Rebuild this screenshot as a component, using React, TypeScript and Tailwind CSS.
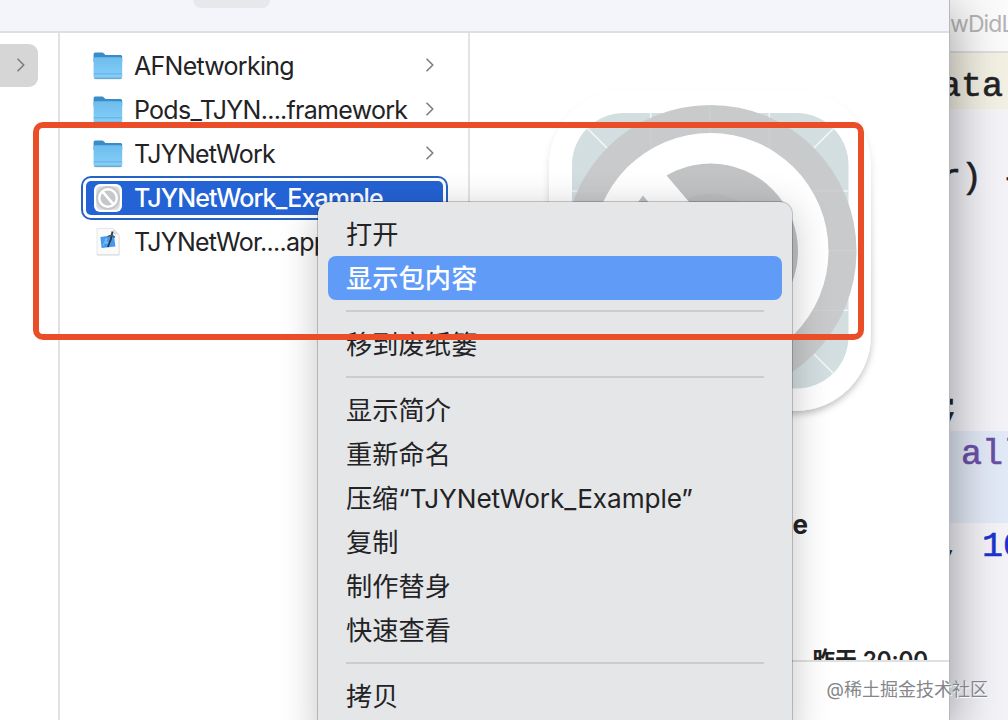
import React from 'react';

type FileItem = {
    name: string;
    kind: 'folder' | 'app' | 'project';
    selected?: boolean;
}

type MenuEntry = {
    label?: string;
    active?: boolean;
    separator?: boolean;
    className?: string;
}

type CodeLine = {
    text: string;
    className?: string;
    tail?: string;
}

const files: FileItem[] = [
    { name: 'AFNetworking', kind: 'folder' },
    { name: 'Pods_TJYN....framework', kind: 'folder' },
    { name: 'TJYNetWork', kind: 'folder' },
    { name: 'TJYNetWork_Example', kind: 'app', selected: true },
    { name: 'TJYNetWor....app', kind: 'project' },
];

const menu: MenuEntry[] = [
    { label: '打开' },
    { label: '显示包内容', active: true },
    { separator: true },
    { label: '移到废纸篓' },
    { separator: true },
    { label: '显示简介' },
    { label: '重新命名' },
    { label: '压缩“TJYNetWork_Example”', className: 'tracking-[-0.07px]' },
    { label: '复制' },
    { label: '制作替身' },
    { label: '快速查看' },
    { separator: true },
    { label: '拷贝' },
];

const code: CodeLine[] = [
    { text: 'ata', className: 'bg-[#f3f0e4]' },
    { text: '' },
    { text: 'r) {' },
    { text: '' },
    { text: '' },
    { text: '' },
    { text: '' },
    { text: ';' },
    { text: ' all', className: 'bg-[#e3eaf7] text-[#6b4fa8]' },
    { text: '', className: 'bg-[#e3eaf7]' },
    { text: ', ', tail: '10' },
];

const Chevron = () => (
    <svg className="-mt-0.5" width="8" height="14" viewBox="0 0 8 14" fill="none" stroke="#7c7c7c" strokeWidth="1.6" strokeLinecap="round" strokeLinejoin="round">
        <path d="M1 1.2 6.8 7 1 12.8" />
    </svg>
);

const FolderIcon = () => (
    <svg width="30" height="28" viewBox="0 0 30 28">
        <defs>
            <linearGradient id="folder" x1="0" y1="0" x2="0" y2="1">
                <stop offset="0" stopColor="#6dbdec" />
                <stop offset="1" stopColor="#86cffa" />
            </linearGradient>
        </defs>
        <rect x="0.8" y="20" width="28.4" height="7.6" rx="2" fill="#000" opacity="0.13" />
        <path d="M.6 2.2Q.6.6 2.2.6H9Q10.2.6 11 1.5L12.4 3H27.6Q29.2 3 29.2 4.8V10H.6Z" fill="#3a8cc8" />
        <path d="M.6 7Q.6 5.2 2.4 5.2H27.4Q29.2 5.2 29.2 7V25Q29.2 26.7 27.4 26.7H2.4Q.6 26.7.6 25Z" fill="url(#folder)" />
        <path d="M.8 21.8H29" stroke="#5aa9dc" strokeWidth="0.8" />
        <path d="M1.4 26.2H28.4" stroke="#549bc9" strokeWidth="1" />
    </svg>
);

const AppIcon = () => (
    <svg width="30" height="30" viewBox="0 0 30 30" fill="none">
        <rect x="1" y="1" width="28" height="28" rx="6" fill="#fff" />
        <rect x="3.2" y="3.2" width="23.6" height="23.6" rx="4.5" fill="#dadddd" />
        <circle cx="15" cy="15" r="12" fill="#c6c7c8" />
        <circle cx="15" cy="15" r="8.8" fill="#c6c7c8" stroke="#fff" strokeWidth="2.4" />
        <path d="M9.3 8.3 20.7 21.7" stroke="#fff" strokeWidth="2.6" />
    </svg>
);

const ProjectIcon = () => (
    <svg width="30" height="32" viewBox="0 0 30 32">
        <path d="M4 3.4H20.2L26.4 9.6V29.6H4Z" fill="#000" opacity="0.16" />
        <path d="M4 2.4H20L26 8.4V28.6H4Z" fill="#fafafa" stroke="#dedede" strokeWidth="0.7" />
        <path d="M20 2.4V8.4H26Z" fill="#dcdcdc" />
        <path d="M7.4 11 21 9.2 22.4 20.6 8.6 22Z" fill="#4299ee" />
        <path d="M10 19.5 14 12 M11 17H18 M12 13 16 19.5" stroke="#7fc0fb" strokeWidth="1.1" />
        <path d="M19.5 5.5 17.8 13.5 14.8 21" stroke="#273a52" strokeWidth="1.8" fill="none" />
        <path d="M14.5 10.6 18 9.4 22 11.2" stroke="#4d5966" strokeWidth="1.5" fill="none" />
    </svg>
);

const icons = { folder: FolderIcon, app: AppIcon, project: ProjectIcon };

// Large "unavailable application" artwork in the preview column
const PreviewArtwork = () => (
    <svg className="ml-[64px]" width="352" height="352" viewBox="534 75 352 352" fill="none">
        <defs>
            <filter id="soft" x="-10%" y="-10%" width="120%" height="125%">
                <feDropShadow dx="0" dy="3" stdDeviation="3.5" floodColor="#000" floodOpacity="0.26" />
            </filter>
            <linearGradient id="fade" gradientUnits="userSpaceOnUse" x1="0" y1="85" x2="0" y2="290">
                <stop offset="0" stopColor="#fff" stopOpacity="0.12" />
                <stop offset="1" stopColor="#fff" />
            </linearGradient>
            <mask id="edge" maskUnits="userSpaceOnUse" x="534" y="75" width="352" height="352">
                <rect x="534" y="75" width="352" height="352" fill="url(#fade)" />
            </mask>
            <clipPath id="tile">
                <rect x="572" y="113" width="276.500" height="275.500" rx="52" />
            </clipPath>
        </defs>
        <g mask="url(#edge)">
            <rect x="549" y="90" width="322" height="321" rx="76" fill="#fff" filter="url(#soft)" />
        </g>
        <rect x="572" y="113" width="276.500" height="275.500" rx="52" fill="#d3dee0" />
        <g clipPath="url(#tile)" stroke="#f1f5f5" strokeWidth="1.6">
            <path d="M650.700 113V389M769.300 113V389M710 113V389M572 191H849M572 250.500H849M572 310.300H849" />
            <path d="M572 113 849 389M849 113 572 389" />
        </g>
        <circle cx="710.500" cy="251" r="146" fill="#c8cacb" />
        <path d="M650.700 118V384M769.300 118V384M710 105V397M577 191H843M564 250.500H856M577 310.300H843" stroke="#ced0d1" />
        <circle cx="710.500" cy="251" r="118" fill="#fff" />
        <circle cx="710.500" cy="251" r="87.500" fill="#c1c3c4" />
        <circle cx="710.500" cy="251" r="57" fill="#bcbebf" />
        <path d="M646 175.300 775 326.700" stroke="#fff" strokeWidth="31" />
    </svg>
);

const FileRow = ({ item }: { item: FileItem }) => {
    const Icon = icons[item.kind];

    if (item.selected) {
        return (
            <div className="h-11 rounded-[10px] border-2 border-[#2763c6] bg-white p-[3px]">
                <div className="flex h-full items-center rounded-[5px] bg-[#2463d6] pl-[7px] text-white">
                    <Icon />
                    <span className="mt-px ml-[11px] font-medium tracking-[-0.9px]">{item.name}</span>
                </div>
            </div>
        );
    }

    return (
        <div className="flex h-11 items-center pr-3.5 pl-3">
            <div className="w-[30px]"><Icon /></div>
            <span className="mt-px ml-[11px] flex-1 whitespace-nowrap">{item.name}</span>
            {item.kind === 'folder' && <Chevron />}
        </div>
    );
};

const ContextMenu = () => (
    <div className="absolute top-[202px] left-[318px] h-[540px] w-[474px] rounded-xl bg-[#e5e6e8] px-2.5 pt-2.5 text-[26.2px] tracking-[0.1px] shadow-[0_0_0_1px_rgba(0,0,0,0.2),0_8px_38px_rgba(0,0,0,0.24)]">
        {menu.map((entry, idx) => (
            entry.separator ? (
                <div key={idx} className="flex h-[22px] items-center px-[18px]">
                    <div className="h-0.5 w-full bg-[#cbccce]" />
                </div>
            ) : (
                <div
                    key={idx}
                    className={`flex h-11 items-center rounded-lg px-[18px] pt-0.5 ${entry.className ?? ''} ${entry.active
                        ? 'bg-[#609bf8] font-medium text-white'
                        : ''
                        }`}
                >
                    {entry.label}
                </div>
            )
        ))}
    </div>
);

const Editor = () => (
    <div className="flex-1 overflow-hidden bg-[#f4f3f8]">
        <div className="flex h-[53px] items-center border-b-2 border-[#dedede] bg-[#fbfbfc] pb-0.5 text-[23px] tracking-[-0.9px] whitespace-nowrap text-[#b4b4b5]">
            wDidLoad
        </div>
        <div className="h-2.5 bg-[#f3f0e4]" />
        <div className="font-['Liberation_Mono',monospace] text-[35px] leading-[48px] whitespace-pre [-webkit-text-stroke:0.6px]">
            {code.map((line, idx) => (
                <div key={idx} className={`h-[46px] ${line.className ?? ''}`}>
                    <span className="-ml-2.5">{line.text}</span>
                    {line.tail && <span className="text-[#1d34cc]">{line.tail}</span>}
                </div>
            ))}
        </div>
    </div>
);

const App = () => {
    return (
        <div className="relative flex h-[720px] w-[1008px] overflow-hidden bg-white font-['Inter','Noto_Sans_CJK_SC',sans-serif] text-[#232325]">
            {/* Finder window */}
            <div className="relative z-10 flex w-[950px] flex-col border-r border-[#b5b7ba] bg-white shadow-[0_10px_50px_rgba(0,0,0,0.42)]">
                <div className="h-[33px] border-b-2 border-[#dfdfe2] bg-[#f4f5fa]">
                    <div className="ml-[193px] h-2 w-[77px] rounded-b-lg bg-[#e7e8ec]" />
                </div>
                <div className="flex min-h-0 flex-1">
                    <div className="w-[60px] border-r-2 border-[#e2e2e2] pt-[11px]">
                        <div className="flex h-[43px] w-[38px] items-center justify-end rounded-r-[9px] bg-[#d6d6d6] pr-[13px]">
                            <Chevron />
                        </div>
                    </div>
                    <div className="w-[410px] border-r-2 border-[#e4e4e4] pt-[11px] pr-5 pl-[21px] text-[25px] tracking-[-0.73px]">
                        {files.map((item) => <FileRow key={item.name} item={item} />)}
                    </div>
                    <div className="flex min-w-0 flex-1 flex-col">
                        <div className="h-[629px] overflow-hidden border-b-2 border-[#e0e0e0] pt-[42px]">
                            <PreviewArtwork />
                            <div className="mt-[78px] pr-[141px] text-right text-[26px] leading-[40px] font-bold">TJYNetWork_Example</div>
                            <div className="mt-[95px] pr-[21px] text-right text-[22.5px] leading-[40px] font-semibold tracking-[-0.1px]">昨天 20:00</div>
                        </div>
                    </div>
                </div>
            </div>

            <Editor />

            <div className="absolute inset-0 z-20 overflow-hidden">
                <ContextMenu />
                {/* Highlight frame */}
                <div className="absolute top-[122px] left-[33px] h-[218px] w-[831px] rounded-[10px] border-[6px] border-[#e94e28]" />
                <div className="absolute right-5 bottom-[17px] text-[18px] leading-[26px] whitespace-nowrap text-[#85868a] [text-shadow:1px_1px_1px_#fff]">
                    @稀土掘金技术社区
                </div>
            </div>
        </div>
    );
};

export default App;
